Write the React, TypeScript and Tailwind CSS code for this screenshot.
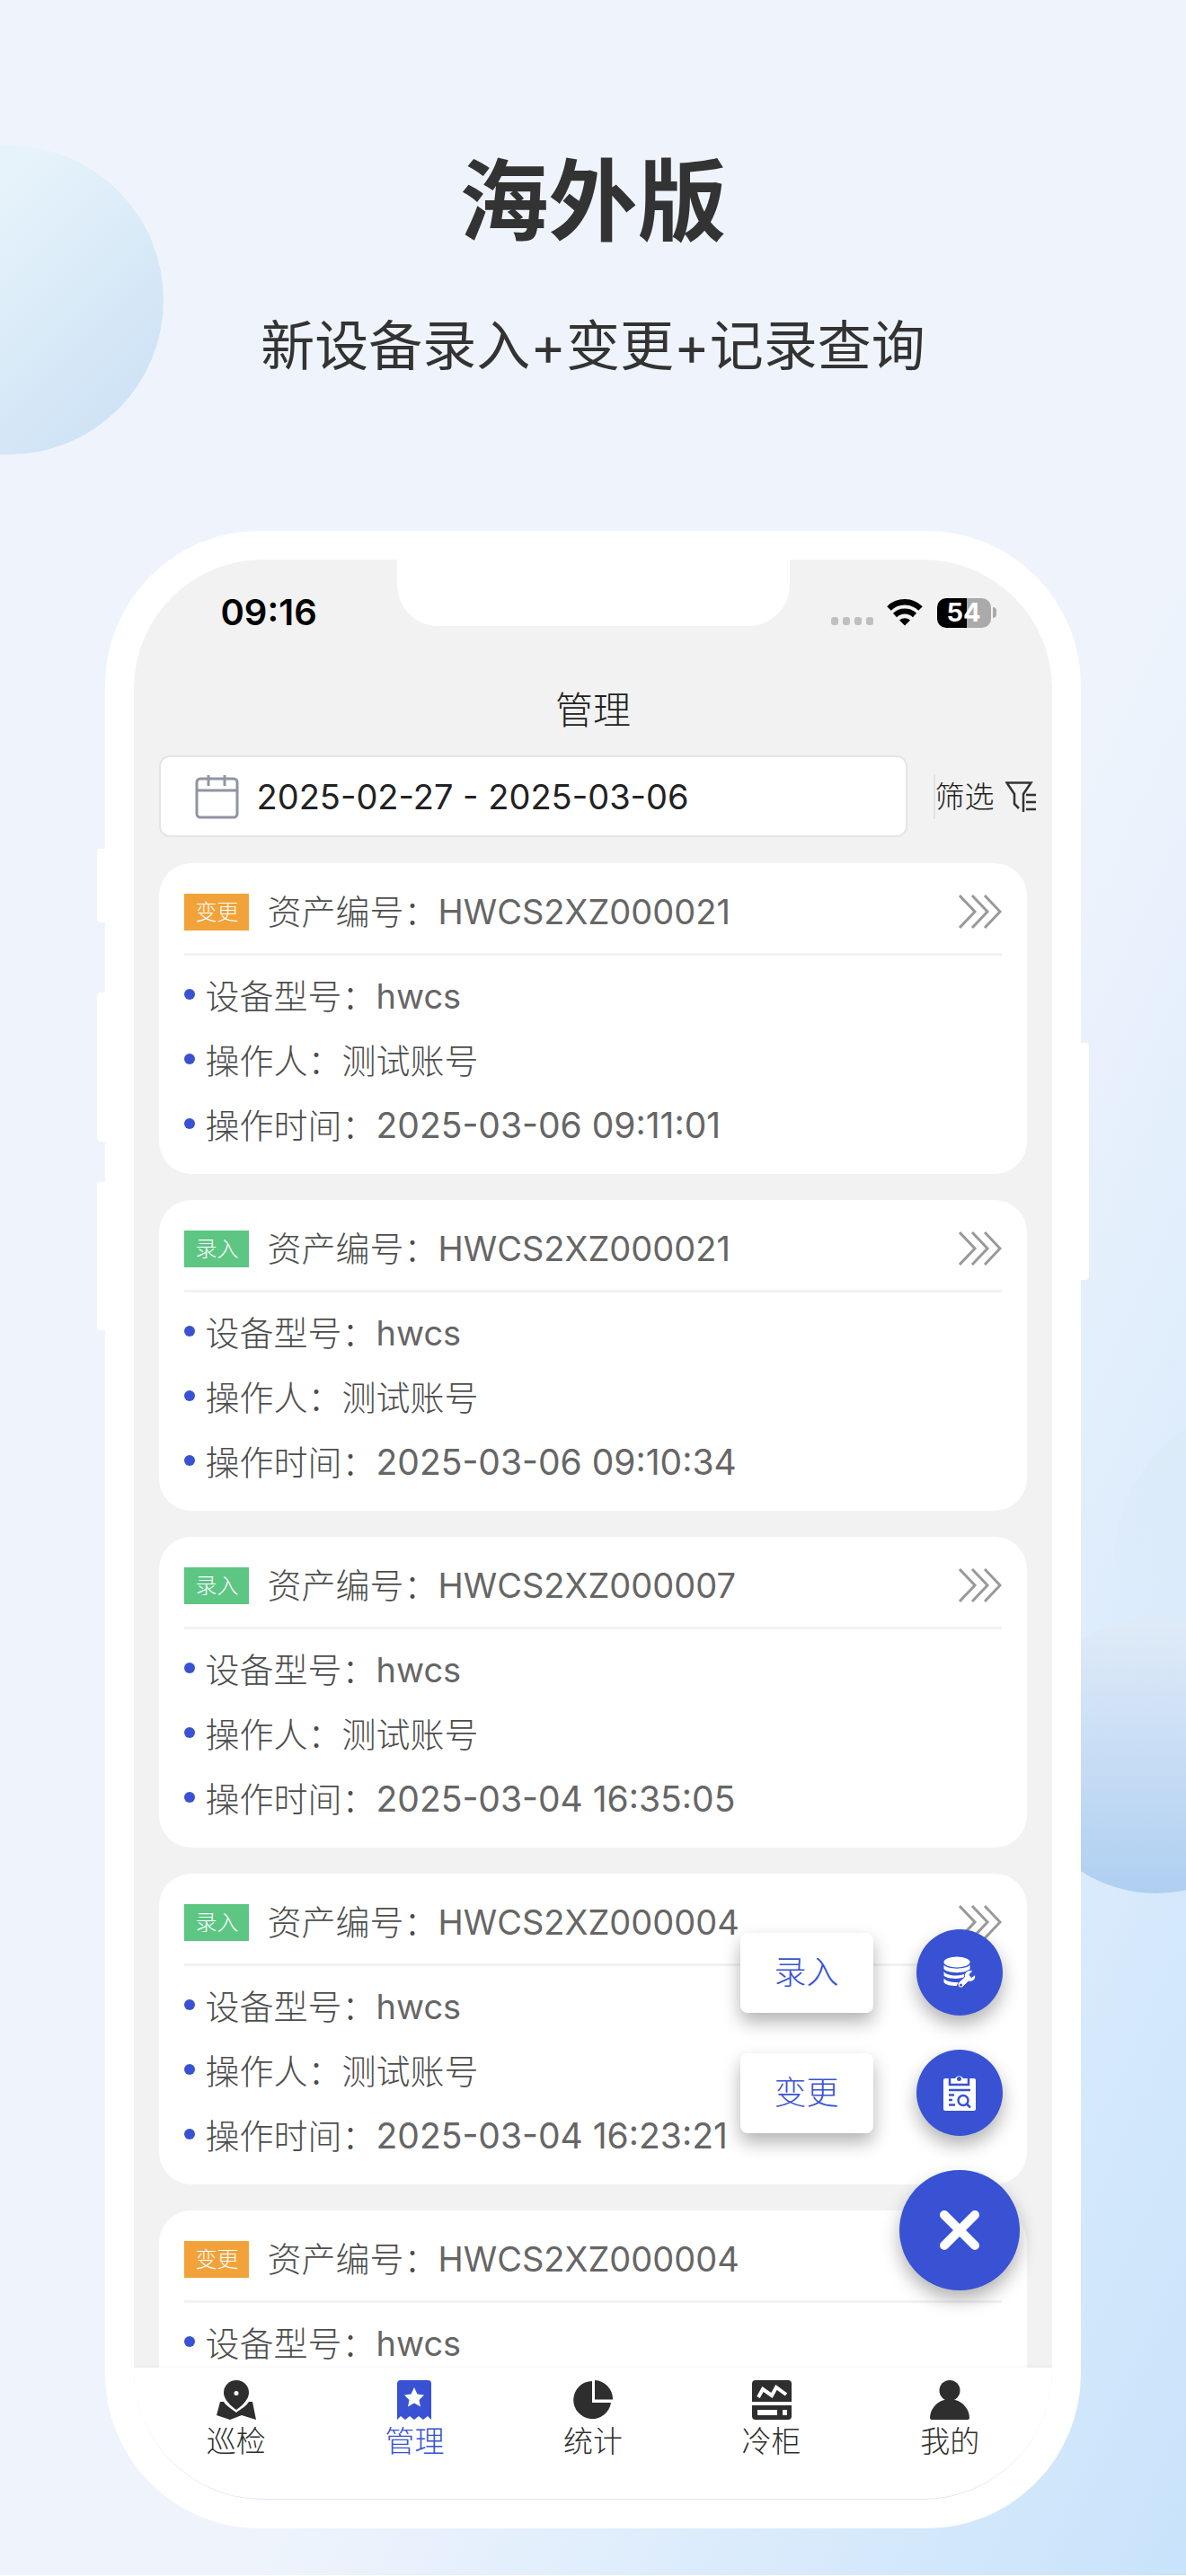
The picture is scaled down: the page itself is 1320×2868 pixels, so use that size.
import type { ReactNode } from "react"

type Device = {
    kind: "change" | "entry"
    code: string
    operator?: string
    time?: string
}

const records: Device[] = [
    { kind: "change", code: "HWCS2XZ000021", operator: "测试账号", time: "2025-03-06 09:11:01" },
    { kind: "entry", code: "HWCS2XZ000021", operator: "测试账号", time: "2025-03-06 09:10:34" },
    { kind: "entry", code: "HWCS2XZ000007", operator: "测试账号", time: "2025-03-04 16:35:05" },
    { kind: "entry", code: "HWCS2XZ000004", operator: "测试账号", time: "2025-03-04 16:23:21" },
    { kind: "change", code: "HWCS2XZ000004" },
]

const StatusBar = () => {
    return (
        <div className="flex items-center justify-between pr-[62px] pl-24 h-[118px]">
            <span className="text-[40px] leading-10 font-semibold text-black">09:16</span>
            <div className="flex items-center">
                <svg className="w-12 h-3 mr-[14px] mt-5" viewBox="0 0 48 12" fill="#bfbfbf">
                    <rect x="0" y="1" width="8" height="9" rx="3" />
                    <rect x="13" y="1" width="8" height="9" rx="3" />
                    <rect x="26" y="1" width="8" height="9" rx="3" />
                    <rect x="39" y="1" width="8" height="9" rx="3" />
                </svg>
                <svg className="w-10 h-[30px] mr-4" viewBox="0 0 40 30" fill="none" stroke="#000">
                    <path d="M2.500 10.500a25 25 0 0 1 35 0" strokeWidth="6.500" />
                    <path d="M9 18a16 16 0 0 1 22 0" strokeWidth="6" />
                    <path d="M20 29.500l-6-6a9 9 0 0 1 12 0z" fill="#000" stroke="none" />
                </svg>
                <div className="flex items-center justify-center w-[60px] h-[33px] rounded-[10px] bg-linear-to-r from-black from-55% to-[#aaaaaa] to-55% text-white text-[29px] leading-8 font-bold">54</div>
                <div className="w-1 h-3 ml-[2px] rounded-r-full bg-[#aaaaaa]"></div>
            </div>
        </div>
    )
}

const Filters = () => {
    return (
        <div className="flex items-center pl-7 pr-4">
            <label className="flex items-center flex-1 min-w-0 h-[91px] pl-[38px] rounded-xl border-2 border-[#e5e5e5] bg-white">
                <svg className="w-[50px] h-[50px] shrink-0 mr-[18px]" viewBox="0 0 50 50" fill="none" stroke="#9094a3" strokeWidth="3">
                    <rect x="2" y="5" width="45" height="43" rx="4" />
                    <path d="M2 18h45M15 1v12M33 1v12" />
                </svg>
                <input aria-label="日期" className="w-full min-w-0 bg-transparent text-[38px] leading-[48px] font-normal text-[#222222] outline-none" defaultValue="2025-02-27 - 2025-03-06" />
            </label>
            <button className="flex items-center h-[50px] ml-[29px] border-l-2 border-[#e3e3e3] text-[33px] leading-[48px] text-[#222222]">
                筛选
                <svg className="w-9 h-9 ml-3" viewBox="0 0 36 36" fill="none" stroke="#333" strokeWidth="2.500">
                    <path d="M15 31l-5-5V15L1.500 2.500h27L20 15v20" />
                    <path d="M23 16h11M23 24h11M23 32h11" />
                </svg>
            </button>
        </div>
    )
}

const Row = ({ label, children }: { label: string, children: ReactNode }) => {
    return (
        <li className="flex items-center h-[72px]">
            <span className="w-3 h-3 mr-[11px] mb-1 rounded-full bg-[#3852d3]"></span>
            <span>{label}：</span>
            {children}
        </li>
    )
}

const Card = ({ item }: { item: Device }) => {
    return (
        <article className="min-h-[346px] px-7 shrink-0 rounded-[36px] bg-white text-[38px] leading-[48px] text-[#4d4d4d]">
            <div className="flex items-center h-[103px] pt-2 border-b-3 border-[#f2f2f2]">
                {item.kind === "change"
                    ? <span className="w-[72px] h-[41px] mr-5 bg-[#f1a33a] text-white text-center text-2xl leading-[41px]">变更</span>
                    : <span className="w-[72px] h-[41px] mr-5 bg-[#5dc683] text-white text-center text-2xl leading-[41px]">录入</span>}
                <span className="flex-1">资产编号：<span className="font-normal text-[#666666]">{item.code}</span></span>
                <svg className="w-12 h-10" viewBox="0 0 48 40" fill="none" stroke="#999" strokeWidth="3">
                    <path d="M1 2l17 18L1 38M15 2l17 18L15 38M29 2l17 18L29 38" />
                </svg>
            </div>
            <ul className="pt-[9px]">
                <Row label="设备型号"><span className="font-normal text-[#666666]">hwcs</span></Row>
                {item.operator && <Row label="操作人"><span>{item.operator}</span></Row>}
                {item.time && <Row label="操作时间"><span className="text-[39px] font-normal text-[#666666]">{item.time}</span></Row>}
            </ul>
        </article>
    )
}

const Actions = () => {
    return (
        <div className="absolute right-9 bottom-[86px] flex flex-col items-end gap-[38px]">
            <div className="flex items-center gap-12 pr-[19px]">
                <button className="w-[148px] h-[89px] rounded-lg bg-white text-[36px] text-[#3852d3] shadow-[0_10px_20px_rgba(0,0,0,0.3)]">录入</button>
                <button aria-label="录入" className="flex items-center justify-center w-24 h-24 rounded-full bg-[#3852d3] shadow-[0_10px_20px_rgba(0,0,0,0.3)]">
                    <svg className="w-9 h-9" viewBox="0 0 36 36" fill="#fff">
                        <ellipse cx="15" cy="6.500" rx="14.500" ry="6" />
                        <path d="M.5 9.500c3 5.500 26 5.500 29 0v4.500c-3 5.500-26 5.500-29 0z" />
                        <path d="M.5 17c3 5.500 20 6 27 1l-5 5.500c-7 2.500-19 1.500-22-2z" />
                        <path d="M.5 24.500c3 4 11 5 17 4.500l-3 4c-6 0-12-1-14-4z" />
                        <path d="M33 16l-4 4.500 2 3 4.500-3c1 5-2.500 8.500-7.500 7.500l-6 6c-3 3-8-1-5-5l6.500-6c-1-5 4-9 9.500-7z" stroke="#3852d3" />
                        <circle cx="19.500" cy="32" r="1.500" fill="#3852d3" />
                    </svg>
                </button>
            </div>
            <div className="flex items-center gap-12 pr-[19px]">
                <button className="w-[148px] h-[89px] rounded-lg bg-white text-[36px] text-[#3852d3] shadow-[0_10px_20px_rgba(0,0,0,0.3)]">变更</button>
                <button aria-label="变更" className="flex items-center justify-center w-24 h-24 rounded-full bg-[#3852d3] shadow-[0_10px_20px_rgba(0,0,0,0.3)]">
                    <svg className="w-9 h-10" viewBox="0 0 36 40" fill="none" stroke="#3852d3" strokeWidth="2.500">
                        <rect x="0" y="4" width="36" height="36" rx="2" fill="#fff" stroke="none" />
                        <path d="M7 2v9h21V2" />
                        <path d="M9 9V4h4a5 5 0 0 1 9 0h4v5z" fill="#fff" stroke="none" />
                        <circle cx="17.500" cy="4.500" r="2.500" fill="#3852d3" stroke="none" />
                        <path d="M6 17h24M6 22.500h6M6 28h4M6 33.500h7" />
                        <circle cx="22" cy="28.500" r="5.500" />
                        <path d="M26 32.500l4 4" />
                    </svg>
                </button>
            </div>
            <button aria-label="关闭" className="flex items-center justify-center w-[134px] h-[134px] rounded-full bg-[#3852d3] shadow-[0_10px_20px_rgba(0,0,0,0.3)]">
                <svg className="w-12 h-12" viewBox="0 0 48 48" fill="none" stroke="#fff" strokeWidth="10" strokeLinecap="round">
                    <path d="M7 7l34 34M41 7L7 41" />
                </svg>
            </button>
        </div>
    )
}

const Tab = ({ label, active, children }: { label: string, active?: boolean, children: ReactNode }) => {
    return (
        <a href="#" className={active ? "flex flex-1 flex-col items-center text-[#3852d3]" : "flex flex-1 flex-col items-center text-[#2e2e2e]"}>
            <svg className="w-11 h-11" viewBox="0 0 44 44" fill="currentColor">{children}</svg>
            <span className="text-[33px] leading-[48px]">{label}</span>
        </a>
    )
}

const TabBar = () => {
    return (
        <nav className="relative flex h-[146px] px-[14px] pt-[14px] bg-white shadow-[0_-2px_4px_rgba(0,0,0,0.03)]">
            <Tab label="巡检">
                <path d="M22 0a14 14 0 0 1 14 14c0 7-7 14-14 19C15 28 8 21 8 14A14 14 0 0 1 22 0z" />
                <path d="M4 24h4c3 5 9 8 14 12 5-4 11-7 14-12h4l4 20-16-5-13 5-15-5z" />
                <circle cx="22" cy="14.500" r="2.500" fill="#fff" />
            </Tab>
            <Tab label="管理" active>
                <path d="M3 4a4 4 0 0 1 4-4h30a4 4 0 0 1 4 4v40l-4-4-5 4-5-4-5 4-5-4-5 4-5-4-4 4z" />
                <path d="M22 8l3.500 7.500 7.500 1-5.500 5.500 1.500 7.500-7-4-7 4 1.500-7.500L11 16.500l7.500-1z" fill="#fff" />
            </Tab>
            <Tab label="统计">
                <path d="M21 1v24h21a21 21 0 1 1-21-24z" />
                <path d="M24 0a21 21 0 0 1 20 21.500H24z" />
            </Tab>
            <Tab label="冷柜">
                <path d="M0 4a4 4 0 0 1 4-4h36a4 4 0 0 1 4 4v20H0zM0 28h44v12a4 4 0 0 1-4 4H4a4 4 0 0 1-4-4z" />
                <path d="M7 19l5-9 10 7 5-9 11 8" fill="none" stroke="#fff" strokeWidth="4" />
                <path d="M6 33h22v6H6zM34 33h5v6h-5z" fill="#fff" />
            </Tab>
            <Tab label="我的">
                <circle cx="22" cy="11.500" r="11.500" />
                <path d="M16 22h12c9 2 16 11 16 20 0 1-1 2-2 2H2c-1 0-2-1-2-2 0-9 7-18 16-20z" />
            </Tab>
        </nav>
    )
}

const Phone = () => {
    return (
        <div className="relative mx-auto mt-[165px] w-[82.2%]">
            <div className="absolute -left-[9px] top-[354px] w-5 h-[82px] rounded-sm bg-white"></div>
            <div className="absolute -left-[9px] top-[514px] w-5 h-[166px] rounded-sm bg-white"></div>
            <div className="absolute -left-[9px] top-[725px] w-5 h-[165px] rounded-sm bg-white"></div>
            <div className="absolute -right-[9px] top-[570px] w-5 h-[264px] rounded-sm bg-white"></div>
            <div className="relative p-8 rounded-[172px] bg-white">
                <div className="relative overflow-hidden rounded-[144px] border-b border-[#dbe8f7] bg-[#f2f2f2]">
                    <div className="absolute top-0 inset-x-0 mx-auto w-[437px] h-[74px] rounded-b-[46px] bg-white"></div>
                    <StatusBar />
                    <h2 className="py-5 text-center text-[42px] leading-[60px] text-[#222222]">管理</h2>
                    <Filters />
                    <div className="relative">
                        <div className="flex flex-col gap-[29px] h-[1704px] pt-[29px] px-7 overflow-hidden">
                            {records.map((item, i) => <Card key={i} item={item} />)}
                        </div>
                        <Actions />
                    </div>
                    <TabBar />
                </div>
            </div>
        </div>
    )
}

export default function App() {
    return (
        <main className="relative overflow-hidden pb-[52px] bg-linear-to-br from-[#eff4fc] from-60% to-[#c8e3fb] font-['Inter','Noto_Sans_CJK_SC',sans-serif] font-light">
            <div className="absolute -left-[162px] top-[162px] w-[344px] h-[344px] rounded-full bg-linear-to-br from-[#e6f3fa] from-30% to-[#c9dff5]"></div>
            <div className="absolute -right-[280px] top-[1560px] w-[360px] h-[360px] rounded-full bg-linear-to-b from-[#dcebf8] to-transparent to-70%"></div>
            <div className="absolute -right-[120px] top-[1801px] w-[307px] h-[307px] rounded-full bg-linear-to-b from-[#e0ebf8] to-[#afcff1]"></div>
            <header className="relative pt-[160px] text-center text-[#333333]">
                <h1 className="text-[99px] leading-[128px] font-bold">海外版</h1>
                <p className="mt-[56px] text-[60px] leading-[82px] font-normal">新设备录入+变更+记录查询</p>
            </header>
            <Phone />
        </main>
    )
}
